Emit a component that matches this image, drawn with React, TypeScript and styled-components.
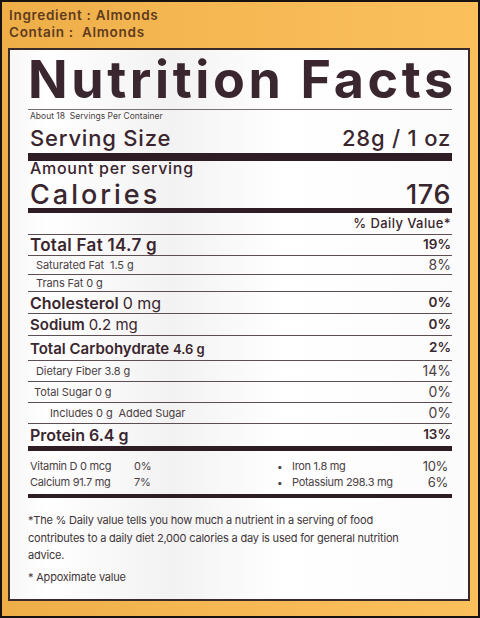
import React from 'react'
import styled, { createGlobalStyle } from 'styled-components'

const GlobalStyle = createGlobalStyle`
  html, body { margin: 0; padding: 0; background: #fff; }
  * { box-sizing: border-box; }
`

const INK = '#3a262e'
const SOFT = '#4a4044'

// orange pack background
const Page = styled.div`
  width: 480px;
  height: 618px;
  border: 2px solid #161212;
  background: linear-gradient(90deg, #eeae48 0%, #f4b752 40%, #fbbf5c 100%);
  font-family: Inter, "Open Sans", "Liberation Sans", sans-serif;
  color: ${INK};
  display: flex;
  flex-direction: column;
`

const Header = styled.div`
  height: 46px;
  padding: 5px 0 0 7px;
  font-size: 13.5px;
  font-weight: 600;
  line-height: 17px;
  letter-spacing: 0.7px;
  color: #5e3b1e;
`

const Panel = styled.div`
  margin: 0 8px 0 6px;
  height: 553px;
  border: 2px solid #3b2a2c;
  background: linear-gradient(90deg, #f7f7f7 0%, #ffffff 8%, #f2f2f2 35%, #ffffff 60%, #fbfbfb 100%);
  padding: 0 16px 0 18px;
  display: flex;
  flex-direction: column;
`

const Title = styled.div`
  height: 60px;
  display: flex;
  align-items: flex-end;
  font-size: 52px;
  font-weight: 700;
  line-height: 1;
  letter-spacing: 3.6px;
  padding-bottom: 3px;
  border-bottom: 1px solid #7a7074;
  white-space: nowrap;
`

const Tiny = styled.div`
  height: 12px;
  font-size: 8.5px;
  line-height: 12px;
  color: ${SOFT};
  padding-left: 2px;
`

const Row = styled.div<{ h: number; size: number; weight?: number; line?: boolean; indent?: number; align?: string; track?: number }>`
  height: ${p => p.h}px;
  display: flex;
  justify-content: space-between;
  align-items: ${p => p.align || 'center'};
  font-size: ${p => p.size}px;
  font-weight: ${p => p.weight || 400};
  line-height: 1;
  letter-spacing: ${p => p.track || 0}px;
  padding-left: ${p => p.indent || 2}px;
  padding-right: 1px;
  border-bottom: ${p => (p.line ? '1px solid #5c4e52' : 'none')};
  white-space: nowrap;
`

const Bar = styled.div<{ h: number }>`
  height: ${p => p.h}px;
  background: #2e1d24;
`

const Light = styled.span`
  font-weight: 400;
`

const Sub = styled.span`
  color: ${SOFT};
  font-size: 11px;
  letter-spacing: -0.1px;
`

const Pct = styled.span<{ bold?: boolean }>`
  font-size: ${p => (p.bold ? 13.5 : 14)}px;
  font-weight: ${p => (p.bold ? 600 : 400)};
  letter-spacing: 0;
  color: ${p => (p.bold ? INK : SOFT)};
`

const Big = styled.span`
  letter-spacing: 0.6px;
`

const Vitamins = styled.div`
  height: 43px;
  display: grid;
  grid-template-columns: 104px 143px 15px 1fr auto;
  align-content: center;
  row-gap: 2px;
  font-size: 11px;
  line-height: 14px;
  color: ${SOFT};
  padding: 2px 4px 0 2px;
  letter-spacing: -0.3px;
`

const VPct = styled.span`
  font-size: 13px;
  text-align: right;
`

const Dot = styled.span`
  font-size: 10px;
`

const Foot = styled.div`
  padding-top: 14px;
  font-size: 11px;
  line-height: 17.5px;
  color: #403438;
  letter-spacing: -0.2px;
  white-space: nowrap;
`

const Approx = styled.div`
  margin-top: 5px;
  font-size: 11px;
  color: #403438;
  letter-spacing: -0.2px;
`

export default function App() {
  return (
    <>
      <GlobalStyle />
      <Page>
        <Header>
          <div>Ingredient : Almonds</div>
          <div>Contain :&nbsp; Almonds</div>
        </Header>
        <Panel>
          <Title>Nutrition Facts</Title>
          <Tiny>About 18&nbsp; Servings Per Container</Tiny>
          <Row h={31} size={22} weight={500} track={0.8}>
            <span>Serving Size</span>
            <span>28g / 1 oz</span>
          </Row>
          <Bar h={8} />
          <Row h={15} size={16} weight={500} align="flex-end" track={0.7}>
            <span>Amount per serving</span>
          </Row>
          <Row h={32} size={27} weight={500} align="flex-end" track={3}>
            <span>Calories</span>
            <Big>176</Big>
          </Row>
          <Bar h={5} />
          <Row h={22} size={13} weight={500} line track={0.4}>
            <span />
            <span>% Daily Value*</span>
          </Row>
          <Row h={21} size={17} weight={600} line track={0.3}>
            <span>Total Fat 14.7 g</span>
            <Pct bold>19%</Pct>
          </Row>
          <Row h={19} size={10} indent={8} line>
            <Sub>Saturated Fat&nbsp; 1.5 g</Sub>
            <Pct>8%</Pct>
          </Row>
          <Row h={17} size={10} indent={8} line>
            <Sub>Trans Fat 0 g</Sub>
          </Row>
          <Row h={22} size={16} weight={600} line>
            <span>Cholesterol <Light>0 mg</Light></span>
            <Pct bold>0%</Pct>
          </Row>
          <Row h={22} size={15} weight={600} line>
            <span>Sodium <Light>0.2 mg</Light></span>
            <Pct bold>0%</Pct>
          </Row>
          <Row h={25} size={15} weight={600} line>
            <span>Total Carbohydrate <span style={{ fontSize: 13 }}>4.6 g</span></span>
            <Pct bold>2%</Pct>
          </Row>
          <Row h={21} size={10} indent={8} line>
            <Sub>Dietary Fiber 3.8 g</Sub>
            <Pct>14%</Pct>
          </Row>
          <Row h={21} size={10} indent={6} line>
            <Sub>Total Sugar 0 g</Sub>
            <Pct>0%</Pct>
          </Row>
          <Row h={21} size={10} indent={22} line>
            <Sub>Includes 0 g&nbsp; Added Sugar</Sub>
            <Pct>0%</Pct>
          </Row>
          <Row h={22} size={16} weight={600}>
            <span>Protein 6.4 g</span>
            <Pct bold>13%</Pct>
          </Row>
          <Bar h={5} />
          <Vitamins>
            <span>Vitamin D 0 mcg</span>
            <span>0%</span>
            <Dot>•</Dot>
            <span>Iron 1.8 mg</span>
            <VPct>10%</VPct>
            <span>Calcium 91.7 mg</span>
            <span>7%</span>
            <Dot>•</Dot>
            <span>Potassium 298.3 mg</span>
            <VPct>6%</VPct>
          </Vitamins>
          <Bar h={4} />
          <Foot>
            *The % Daily value tells you how much a nutrient in a serving of food
            <br />
            contributes to a daily diet 2,000 calories a day is used for general nutrition
            <br />
            advice.
          </Foot>
          <Approx>* Appoximate value</Approx>
        </Panel>
      </Page>
    </>
  )
}
